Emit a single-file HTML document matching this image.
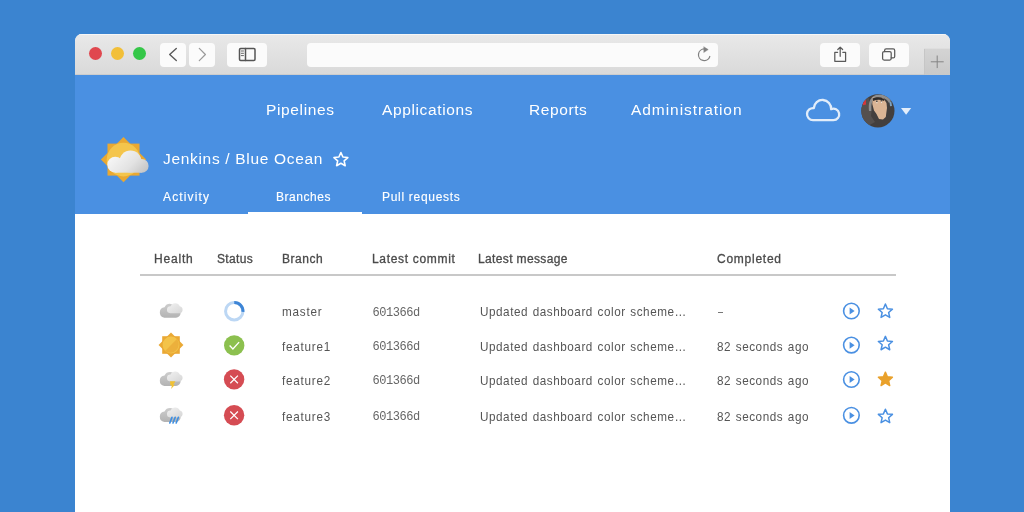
<!DOCTYPE html>
<html><head><meta charset="utf-8">
<style>
*{margin:0;padding:0;box-sizing:border-box}
html,body{width:1024px;height:512px;overflow:hidden}
body{background:#3b84d0;position:relative;font-family:"Liberation Sans",sans-serif;will-change:transform}
.abs{position:absolute}
#win{position:absolute;left:75px;top:34px;width:875px;height:478px;border-radius:7px 7px 0 0;overflow:hidden;background:#fff}
#tb{position:absolute;left:0;top:0;width:875px;height:41px;background:linear-gradient(#e9e9e9,#d9d9d9);box-shadow:inset 0 1px 0 #f6f6f6,inset 0 -1px 0 #cdcdcd}
.dot{position:absolute;width:13px;height:13px;border-radius:50%;top:12.5px}
.btn{position:absolute;top:9px;height:24px;background:#fbfbfb;border-radius:4px}
#hdr{position:absolute;left:0;top:41px;width:875px;height:139px;background:#4a90e2}
.nav{position:absolute;color:#fff;font-size:15.5px;white-space:nowrap;line-height:16px}
.tab{position:absolute;color:#fff;font-size:12px;font-weight:400;-webkit-text-stroke:0.15px #fff;white-space:nowrap;line-height:12px}
.th{position:absolute;color:#4a4a4a;font-size:12px;font-weight:400;-webkit-text-stroke:0.3px #4a4a4a;white-space:nowrap;line-height:12px}
.td{position:absolute;color:#555;font-size:13px;white-space:nowrap;line-height:13px;transform:scaleX(0.9);transform-origin:0 0;letter-spacing:0.6px;word-spacing:1px}
.mono{position:absolute;color:#666;font-family:"Liberation Mono",monospace;font-size:12px;letter-spacing:-0.45px;white-space:nowrap;line-height:12px}
svg{position:absolute;overflow:visible}
</style></head><body>
<div id="win">
  <div id="tb">
    <div class="dot" style="left:14px;background:#e0484f"></div>
    <div class="dot" style="left:36px;background:#f2bf38"></div>
    <div class="dot" style="left:58px;background:#35c748"></div>
    <div class="btn" style="left:85px;width:26px"></div>
    <div class="btn" style="left:114px;width:26px"></div>
    <div class="btn" style="left:152px;width:40px"></div>
    <div class="btn" style="left:232px;width:411px"></div>
    <div class="btn" style="left:745px;width:40px"></div>
    <div class="btn" style="left:794px;width:40px"></div>
    <div class="abs" style="left:849px;top:14px;width:26px;height:27px;background:linear-gradient(#d4d4d4,#c9c9c9);box-shadow:inset 0 1px 0 #dedede,inset 1px 0 0 #c6c6c6"></div>
  </div>
  <div id="hdr"></div>
</div>
<!-- toolbar icons (page coords) -->
<svg width="1024" height="512" style="left:0;top:0" viewBox="0 0 1024 512">
  <g fill="none" stroke-linecap="round" stroke-linejoin="round">
    <path d="M176.3 48.4 L169.7 54.5 L176.3 60.6" stroke="#5a5a5a" stroke-width="1.4"/>
    <path d="M199.3 48.4 L205.4 54.5 L199.3 60.6" stroke="#9a9a9a" stroke-width="1.25"/>
    <rect x="239.5" y="48.5" width="15.5" height="12" rx="1.2" stroke="#555" stroke-width="1.5"/>
    <path d="M245.5 48.5 V60.5" stroke="#555" stroke-width="1.5"/>
    <path d="M241.3 51 H243.5 M241.3 53.3 H243.5 M241.3 55.6 H243.5" stroke="#666" stroke-width="1"/>
    <path d="M709.8 56.5 A5.8 5.8 0 1 1 704.5 49" stroke="#808080" stroke-width="1.25"/>
    <path d="M704 46.9 L708.2 49.6 L704 52.3 Z" fill="#808080" stroke="#808080" stroke-width="0.5"/>
    <path d="M837.6 52.3 H834.8 V61.3 H845.6 V52.3 H842.8" stroke="#5a5a5a" stroke-width="1.25"/>
    <path d="M840.2 56.3 V47.2 M837.8 49.5 L840.2 47.1 L842.6 49.5" stroke="#5a5a5a" stroke-width="1.25"/>
    <rect x="882.6" y="51.6" width="8.6" height="8.5" rx="1.5" stroke="#5a5a5a" stroke-width="1.25"/>
    <path d="M884.6 51.6 V50.4 A1.5 1.5 0 0 1 886.1 48.9 H893.2 A1.5 1.5 0 0 1 894.7 50.4 V56.4 A1.5 1.5 0 0 1 893.2 57.9 H891.2" stroke="#5a5a5a" stroke-width="1.25"/>
    <path d="M931.2 61.8 H943.3 M937.2 55.9 V67.7" stroke="#858585" stroke-width="1"/>
  </g>
</svg>

<div class="nav" style="left:266px;top:102px;letter-spacing:0.65px">Pipelines</div>
<div class="nav" style="left:382px;top:102px;letter-spacing:0.63px">Applications</div>
<div class="nav" style="left:529px;top:102px;letter-spacing:0.6px">Reports</div>
<div class="nav" style="left:631px;top:102px;letter-spacing:0.95px">Administration</div>

<!-- header cloud -->
<svg width="40" height="30" style="left:804px;top:96px" viewBox="804 96 40 30">
  <path d="M813 120.1 A6 6 0 1 1 813.8 108.15 A8.7 8.7 0 1 1 831.17 109.2 A5.7 5.7 0 1 1 833.5 120.1 Z" fill="none" stroke="#e2edfa" stroke-width="2.3" stroke-linejoin="round"/>
</svg>
<!-- avatar -->
<svg width="40" height="40" style="left:858px;top:91px" viewBox="858 91 40 40">
  <defs><clipPath id="avc"><circle cx="877.9" cy="110.8" r="16.6"/></clipPath></defs>
  <g clip-path="url(#avc)">
    <rect x="860" y="93" width="36" height="36" fill="#433f3e"/>
    <path d="M860 100 L868 96 L872 108 L871 116 L875 122 L868 126 L860 126 Z" fill="#55504e"/>
    <path d="M869 111 C868 103 870 97 876 95 C882 93.5 888 95 891 101 L889 103 C887 99 882 96.8 877 97.5 C872.5 98.3 871 103 871.3 111 Z" fill="#8e8e8e"/>
    <path d="M872.5 97.5 L883 97.8 L886.5 103 L887 108 L886.3 113 L885.8 117 L883 119.5 L879 119 L876.5 114 L874 110.5 L872.3 104 Z" fill="#dbb595"/>
    <path d="M872.6 98.6 C876 96.8 881 96.6 884.5 99.5 L884 101 C881 99.5 877 99.3 873 101 Z" fill="#2e2b2a"/>
    <rect x="876" y="100.6" width="1.6" height="1.2" fill="#3a3a3a"/><rect x="880.6" y="100.2" width="1.6" height="1.2" fill="#3a3a3a"/>
    <rect x="876.4" y="102.2" width="1" height="1" fill="#eee"/><rect x="881" y="101.8" width="1" height="1" fill="#eee"/>
    <path d="M862.6 100.4 L865.8 99.5 L866 104.5 L862.8 105.2 Z" fill="#d9363a"/>
    <path d="M889.5 102 L891.3 101.5 L892 106 L890 106.3 Z" fill="#7fa3c0"/>
  </g>
</svg>
<svg width="12" height="8" style="left:900px;top:107px" viewBox="900 107 12 8"><path d="M901 108 H911.2 L906.1 114.8 Z" fill="#e3eefb"/></svg>

<!-- logo -->
<svg width="60" height="60" style="left:93px;top:130px" viewBox="93 130 60 60">
  <defs>
    <linearGradient id="cg" gradientUnits="userSpaceOnUse" x1="118" y1="152" x2="142" y2="176">
      <stop offset="0" stop-color="#f5f5f5"/><stop offset="0.55" stop-color="#e2e2e2"/><stop offset="1" stop-color="#c4c4c4"/>
    </linearGradient>
  </defs>
  <rect x="107.5" y="143.6" width="32" height="32" fill="#e9a832"/>
  <rect x="107.5" y="143.6" width="32" height="32" fill="#e9a832" transform="rotate(45 123.5 159.6)"/>
  <circle cx="123.5" cy="159.6" r="16.8" fill="#f4c54c"/>
  <g fill="url(#cg)"><circle cx="115.3" cy="164.7" r="8"/><circle cx="130.5" cy="161.5" r="11"/><circle cx="141.8" cy="165.9" r="6.8"/><rect x="115.3" y="164.7" width="26.5" height="8"/></g>
</svg>
<div class="nav" style="left:163px;top:150.9px;letter-spacing:0.68px">Jenkins / Blue Ocean</div>
<svg width="20" height="20" style="left:331px;top:150px" viewBox="331 150 20 20">
  <path d="M340.90 152.50 L342.90 157.05 L347.84 157.54 L344.13 160.85 L345.19 165.71 L340.90 163.20 L336.61 165.71 L337.67 160.85 L333.96 157.54 L338.90 157.05 Z" fill="none" stroke="#fff" stroke-width="1.6" stroke-linejoin="round"/>
</svg>

<div class="tab" style="left:163px;top:190.6px;letter-spacing:1.15px">Activity</div>
<div class="tab" style="left:276px;top:190.6px;letter-spacing:0.55px">Branches</div>
<div class="tab" style="left:382px;top:190.6px;letter-spacing:0.7px">Pull requests</div>
<div class="abs" style="left:248px;top:212px;width:114px;height:2px;background:#fff"></div>

<div class="th" style="left:154px;top:253.2px;letter-spacing:0.8px">Health</div>
<div class="th" style="left:217px;top:253.2px;letter-spacing:0.36px">Status</div>
<div class="th" style="left:282px;top:253.2px;letter-spacing:0.52px">Branch</div>
<div class="th" style="left:372px;top:253.2px;letter-spacing:0.68px">Latest commit</div>
<div class="th" style="left:478px;top:253.2px;letter-spacing:0.36px">Latest message</div>
<div class="th" style="left:717px;top:253.2px;letter-spacing:0.75px">Completed</div>
<div class="abs" style="left:140px;top:274px;width:756px;height:2px;background:#c8c8c8"></div>

<!-- rows -->
<div class="td" style="left:282px;top:305.1px;letter-spacing:0.85px">master</div>
<div class="td" style="left:282px;top:339.5px;letter-spacing:0.85px">feature1</div>
<div class="td" style="left:282px;top:374px;letter-spacing:0.85px">feature2</div>
<div class="td" style="left:282px;top:409.9px;letter-spacing:0.85px">feature3</div>
<div class="mono" style="left:372.5px;top:306.5px">601366d</div>
<div class="mono" style="left:372.5px;top:340.9px">601366d</div>
<div class="mono" style="left:372.5px;top:375.4px">601366d</div>
<div class="mono" style="left:372.5px;top:411.3px">601366d</div>
<div class="td" style="left:480px;top:305.1px">Updated dashboard color scheme…</div>
<div class="td" style="left:480px;top:339.5px">Updated dashboard color scheme…</div>
<div class="td" style="left:480px;top:374px">Updated dashboard color scheme…</div>
<div class="td" style="left:480px;top:409.9px">Updated dashboard color scheme…</div>
<div class="abs" style="left:718px;top:312px;width:5.4px;height:1.1px;background:#777"></div>
<div class="td" style="left:717px;top:339.5px">82 seconds ago</div>
<div class="td" style="left:717px;top:374px">82 seconds ago</div>
<div class="td" style="left:717px;top:409.9px">82 seconds ago</div>

<svg width="1024" height="512" style="left:0;top:0" viewBox="0 0 1024 512">
  <defs>
    <linearGradient id="dg" x1="0" y1="0" x2="0" y2="1"><stop offset="0" stop-color="#cdcdcd"/><stop offset="1" stop-color="#b3b3b3"/></linearGradient>
    <linearGradient id="lg" x1="0" y1="0" x2="1" y2="1"><stop offset="0" stop-color="#f2f2f2"/><stop offset="1" stop-color="#d6d6d6"/></linearGradient>
    <g id="cl2">
      <path d="M164.3 317.7 H176 A4.6 4.6 0 0 0 176 308.5 A6.2 6.2 0 0 0 164.5 307.2 A5.3 5.3 0 0 0 164.3 317.7 Z" fill="url(#dg)"/>
      <path d="M170.3 313.2 H179.5 A3.5 3.5 0 0 0 179.8 306.3 A5 5 0 0 0 170.6 306.2 A3.5 3.5 0 0 0 170.3 313.2 Z" fill="url(#lg)"/>
    </g>
  </defs>
  <!-- row1 health: cloudy -->
  <use href="#cl2"/>
  <!-- row2 health: sun -->
  <rect x="162.2" y="336.2" width="17.6" height="17.6" fill="#eaa935"/>
  <rect x="162.2" y="336.2" width="17.6" height="17.6" fill="#eaa935" transform="rotate(45 171 345)"/>
  <circle cx="171" cy="345" r="8.4" fill="#f3c34a"/>
  <path d="M176.9 339.1 L165.1 350.9 A8.4 8.4 0 0 0 176.9 339.1 Z" fill="#ebae3b" opacity="0.9"/>
  <!-- row3 storm -->
  <use href="#cl2" transform="translate(0 68.2)"/>
  <path d="M170 381.2 H175.5 L173.2 384.8 H175 L171 389 L172 385.5 H170.5 Z" fill="#f1c232"/>
  <!-- row4 rain -->
  <use href="#cl2" transform="translate(0 104.2)"/>
  <path d="M172 417.3 L169.8 423 M175.2 417.3 L173 423 M178.4 417.3 L176.2 423" stroke="#3d8fe3" stroke-width="1.6" stroke-linecap="round"/>

  <!-- status -->
  <circle cx="234.25" cy="311.2" r="8.7" fill="none" stroke="#bcd7f4" stroke-width="3"/>
  <path d="M234.25 302.5 A8.7 8.7 0 0 1 242.92 311.96" fill="none" stroke="#3d85d6" stroke-width="3"/>
  <circle cx="234.2" cy="345.4" r="10.2" fill="#8cc04f"/>
  <path d="M229.6 345.6 L232.9 348.9 L239.1 342.1" fill="none" stroke="#fff" stroke-width="1.35"/>
  <circle cx="234.1" cy="379.4" r="10.2" fill="#d54c53"/>
  <path d="M230.3 375.6 L237.9 383.2 M237.9 375.6 L230.3 383.2" stroke="#fff" stroke-width="1.25"/>
  <circle cx="234.1" cy="415.3" r="10.2" fill="#d54c53"/>
  <path d="M230.3 411.5 L237.9 419.1 M237.9 411.5 L230.3 419.1" stroke="#fff" stroke-width="1.25"/>

  <!-- actions -->
  <g id="play">
    <circle cx="851.4" cy="311" r="7.8" fill="none" stroke="#4a90e2" stroke-width="1.6"/>
    <path d="M849.6 307.6 L854.6 311.1 L849.6 314.6 Z" fill="#4a90e2"/>
  </g>
  <use href="#play" transform="translate(0 34.1)"/>
  <use href="#play" transform="translate(0 68.5)"/>
  <use href="#play" transform="translate(0 104.3)"/>
  <g id="star"><path d="M885.40 304.05 L887.40 308.70 L892.44 309.16 L888.63 312.50 L889.75 317.44 L885.40 314.85 L881.05 317.44 L882.17 312.50 L878.36 309.16 L883.40 308.70 Z" fill="none" stroke="#4a90e2" stroke-width="1.5" stroke-linejoin="round"/></g>
  <use href="#star" transform="translate(0 32.3)"/>
  <path d="M885.40 372.15 L887.40 376.80 L892.44 377.26 L888.63 380.60 L889.75 385.54 L885.40 382.95 L881.05 385.54 L882.17 380.60 L878.36 377.26 L883.40 376.80 Z" fill="#e9a12b" stroke="#e9a12b" stroke-width="1.4" stroke-linejoin="round"/>
  <use href="#star" transform="translate(0 105.2)"/>
</svg>
</body></html>
